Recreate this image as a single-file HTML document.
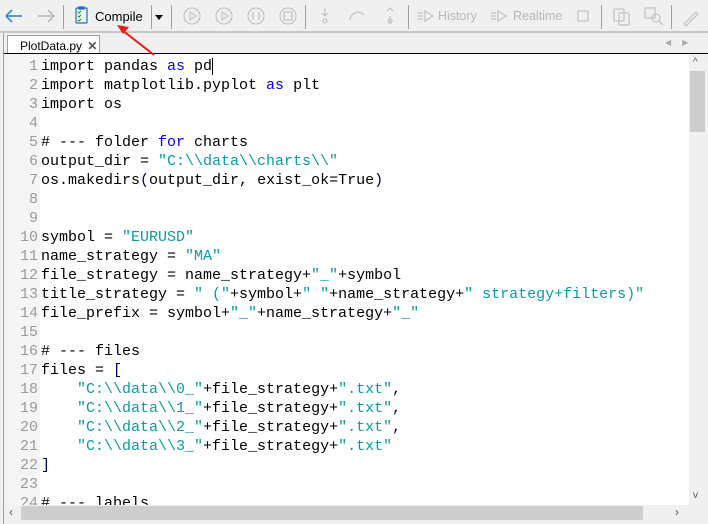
<!DOCTYPE html>
<html><head><meta charset="utf-8"><style>
*{margin:0;padding:0;box-sizing:border-box}
body{width:708px;height:524px;background:#f0f0f0;position:relative;overflow:hidden;font-family:"Liberation Sans",sans-serif}
.abs{position:absolute}
.sep{position:absolute;top:5px;width:1px;height:24px;background:#a0a0a0}
.tb{font-size:12.5px;color:#b8b8b8}
.code{position:absolute;left:7px;top:54px;width:682px;height:451px;background:#fff;overflow:hidden}
.gut{position:absolute;left:0;top:0;width:33px;height:100%;background:#f5f5f5}
.ln{position:absolute;left:0;width:31px;text-align:right;color:#9a9a9a}
.ln,.tx{font-family:"Liberation Mono",monospace;font-size:15px;line-height:19px;height:19px;white-space:pre}
.tx{position:absolute;left:34px;color:#000}
.k{color:#0000ff}.s{color:#0a9ba0}.p{color:#000060}
</style></head><body>
<svg class="abs" style="left:0;top:0" width="708" height="34">
<g stroke="#2a7ad5" stroke-width="1.5" fill="none"><path d="M6 16H22M6 16L12 10M6 16L12 22"/></g>
<g stroke="#b8b8b8" stroke-width="1.5" fill="none"><path d="M38 16H54M54 16L48 10M54 16L48 22"/></g>
<g stroke="#1e6fc0" fill="none" stroke-width="1.2"><rect x="76" y="8" width="11" height="15" rx="1"/><path d="M79 7h5v2h-5z"/></g>
<g stroke="#2a9a2a" stroke-width="1.2" fill="none"><path d="M78 12l1 1 2-2M78 16l1 1 2-2M78 20l1 1 2-2"/></g>
<g stroke="#c4c4c4" stroke-width="1.3" fill="none">
<circle cx="192" cy="16" r="8"/><path d="M190 12v8l6-4z"/>
<circle cx="224" cy="16" r="8"/><path d="M222 12v8l6-4z"/>
<circle cx="256" cy="16" r="8"/><path d="M253 12v8M259 12v8"/>
<circle cx="288" cy="16" r="8"/><rect x="284" y="12" width="8" height="8"/>
<path d="M325 8v8M322 13l3 3 3-3"/><circle cx="325" cy="21" r="2"/>
<path d="M350 20a8 8 0 0 1 14-5"/>
<path d="M390 24v-8M387 11l3-3 3 3"/><circle cx="390" cy="21" r="2"/>
<path d="M418 13h5M418 16h5M418 19h5M425 11l8 5-8 5z"/>
<path d="M491 13h5M491 16h5M491 19h5M498 11l8 5-8 5z"/>
<rect x="578" y="11" width="10" height="10" rx="1"/>
<rect x="614" y="9" width="10" height="12" rx="1"/><rect x="619" y="13" width="10" height="12" rx="1"/>
<rect x="645" y="8" width="10" height="10"/><circle cx="656" cy="18" r="4"/><path d="M659 21l4 4"/>
<path d="M684 24l12-12 2 2-12 12z"/>
</g>
<line x1="0" y1="32" x2="708" y2="32" stroke="#a0a0a0"/>
</svg>
<div class="sep" style="left:63px"></div>
<div class="sep" style="left:151px"></div>
<div class="sep" style="left:171px"></div>
<div class="sep" style="left:305px"></div>
<div class="sep" style="left:408px"></div>
<div class="sep" style="left:601px"></div>
<div class="sep" style="left:671px"></div>
<div class="abs" style="left:95px;top:9px;font-size:13px;color:#000">Compile</div>
<svg class="abs" style="left:154px;top:13px" width="12" height="8"><path d="M1 2h8l-4 5z" fill="#000"/></svg>
<div class="abs tb" style="left:438px;top:9px">History</div>
<div class="abs tb" style="left:513px;top:9px">Realtime</div>
<div class="abs" style="left:3px;top:33px;width:705px;height:491px;border-left:1px solid #a0a0a0"></div>
<div class="abs" style="left:7px;top:35px;width:93px;height:19px;background:#fff;border:1px solid #a0a0a0;border-bottom:none;font-size:12px;padding:3px 0 0 12px">PlotData.py <span style="color:#555;font-weight:bold;margin-left:2px">✕</span></div>
<div class="abs" style="left:665px;top:38px;font-size:8px;color:#aaa">◀&nbsp;&nbsp;&nbsp;&nbsp;&nbsp;▶</div>
<div class="abs" style="left:4px;top:53px;width:704px;height:1px;background:#000"></div>
<div class="code"><div class="gut"></div>
<div class="ln" style="top:3px">1</div><div class="tx" style="top:3px">import pandas <span class="k">as</span> pd<span style="border-left:1px solid #000"></span></div>
<div class="ln" style="top:22px">2</div><div class="tx" style="top:22px">import matplotlib.pyplot <span class="k">as</span> plt</div>
<div class="ln" style="top:41px">3</div><div class="tx" style="top:41px">import os</div>
<div class="ln" style="top:60px">4</div>
<div class="ln" style="top:79px">5</div><div class="tx" style="top:79px"># --- folder <span class="k">for</span> charts</div>
<div class="ln" style="top:98px">6</div><div class="tx" style="top:98px">output_dir = <span class="s">"C:\\data\\charts\\"</span></div>
<div class="ln" style="top:117px">7</div><div class="tx" style="top:117px">os.makedirs<span class="p">(</span>output_dir, exist_ok=True<span class="p">)</span></div>
<div class="ln" style="top:136px">8</div>
<div class="ln" style="top:155px">9</div>
<div class="ln" style="top:174px">10</div><div class="tx" style="top:174px">symbol = <span class="s">"EURUSD"</span></div>
<div class="ln" style="top:193px">11</div><div class="tx" style="top:193px">name_strategy = <span class="s">"MA"</span></div>
<div class="ln" style="top:212px">12</div><div class="tx" style="top:212px">file_strategy = name_strategy+<span class="s">"_"</span>+symbol</div>
<div class="ln" style="top:231px">13</div><div class="tx" style="top:231px">title_strategy = <span class="s">" ("</span>+symbol+<span class="s">" "</span>+name_strategy+<span class="s">" strategy+filters)"</span></div>
<div class="ln" style="top:250px">14</div><div class="tx" style="top:250px">file_prefix = symbol+<span class="s">"_"</span>+name_strategy+<span class="s">"_"</span></div>
<div class="ln" style="top:269px">15</div>
<div class="ln" style="top:288px">16</div><div class="tx" style="top:288px"># --- files</div>
<div class="ln" style="top:307px">17</div><div class="tx" style="top:307px">files = <span class="p">[</span></div>
<div class="ln" style="top:326px">18</div><div class="tx" style="top:326px">    <span class="s">"C:\\data\\0_"</span>+file_strategy+<span class="s">".txt"</span><span class="p">,</span></div>
<div class="ln" style="top:345px">19</div><div class="tx" style="top:345px">    <span class="s">"C:\\data\\1_"</span>+file_strategy+<span class="s">".txt"</span><span class="p">,</span></div>
<div class="ln" style="top:364px">20</div><div class="tx" style="top:364px">    <span class="s">"C:\\data\\2_"</span>+file_strategy+<span class="s">".txt"</span><span class="p">,</span></div>
<div class="ln" style="top:383px">21</div><div class="tx" style="top:383px">    <span class="s">"C:\\data\\3_"</span>+file_strategy+<span class="s">".txt"</span></div>
<div class="ln" style="top:402px">22</div><div class="tx" style="top:402px"><span class="p">]</span></div>
<div class="ln" style="top:421px">23</div>
<div class="ln" style="top:440px">24</div><div class="tx" style="top:440px"># --- labels</div>
</div>
<div class="abs" style="left:689px;top:54px;width:17px;height:451px;background:#f0f0f0"></div>
<div class="abs" style="left:690px;top:71px;width:15px;height:61px;background:#cdcdcd"></div>
<div class="abs" style="left:693px;top:57px;font-size:10px;color:#555">^</div>
<div class="abs" style="left:693px;top:490px;font-size:10px;color:#555">v</div>
<div class="abs" style="left:7px;top:505px;width:699px;height:17px;background:#f0f0f0"></div>
<div class="abs" style="left:21px;top:506px;width:622px;height:14px;background:#cdcdcd"></div>
<div class="abs" style="left:9px;top:505px;font-size:12px;color:#555">‹</div>
<div class="abs" style="left:675px;top:505px;font-size:12px;color:#555">›</div>
<svg class="abs" style="left:0;top:0" width="708" height="80">
<line x1="154" y1="55" x2="122" y2="30" stroke="#e81b1b" stroke-width="2"/>
<path d="M117 25l12 2-6 7z" fill="#e81b1b"/>
</svg>
</body></html>
